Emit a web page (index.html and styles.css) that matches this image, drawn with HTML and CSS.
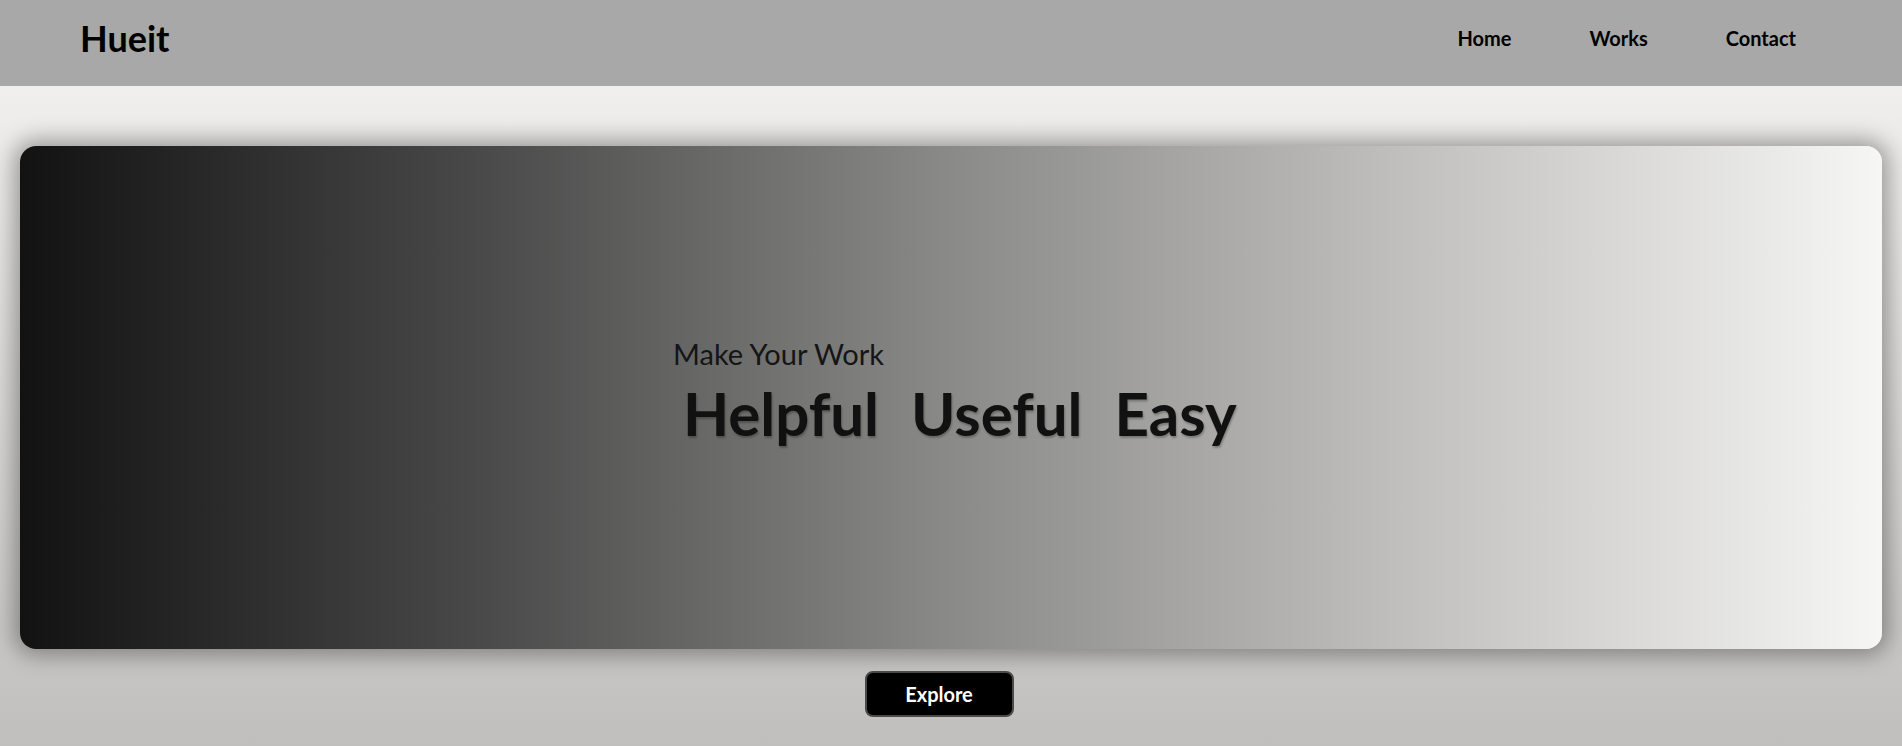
FILE: index.html
```html
<!DOCTYPE html>
<html lang="en">
<head>
<meta charset="utf-8">
<title>Hueit</title>
<link rel="stylesheet" href="styles.css">
</head>
<body>
<header class="topbar">
  <div class="logo">Hueit</div>
  <nav class="nav">
    <a class="nav-link" href="#">Home</a>
    <a class="nav-link" href="#">Works</a>
    <a class="nav-link" href="#">Contact</a>
  </nav>
</header>
<main class="main">
  <section class="hero">
    <div class="hero-text">
      <p class="hero-sub">Make Your Work</p>
      <h1 class="hero-title"><span class="word">Helpful</span><span class="word">Useful</span><span class="word">Easy</span></h1>
    </div>
  </section>
  <div class="actions">
    <button class="explore">Explore</button>
  </div>
</main>
</body>
</html>
```
FILE: styles.css
```css
html, body {
  margin: 0;
  padding: 0;
}
body {
  font-family: "Trebuchet MS", Lato, "Noto Sans", sans-serif;
  background: linear-gradient(to bottom, #a8a8a8 0, #a8a8a8 86px, #f0efed 86px, #c0bfbd 746px);
  min-height: 746px;
  overflow: hidden;
}
.topbar {
  height: 86px;
  display: flex;
  align-items: center;
  justify-content: space-between;
  padding: 0 106px 0 80px;
  background: #a8a8a8;
}
.logo {
  font-size: 36px;
  font-weight: 700;
  color: #000;
  margin-top: -10px;
}
.nav {
  display: flex;
  gap: 78px;
}
.nav-link {
  font-size: 20px;
  font-weight: 700;
  color: #000;
  text-decoration: none;
  margin-top: -10px;
}
.main {
  padding: 60px 20px 0;
}
.hero {
  height: 503px;
  border-radius: 16px;
  background: linear-gradient(to right, #121212 0%, #4a4a4a 25%, #8a8a88 50%, #c2c1bf 75%, #f6f6f4 100%);
  box-shadow: 0 0 22px 6px rgba(0, 0, 0, 0.35);
  display: flex;
  align-items: center;
  padding-left: 653px;
  box-sizing: border-box;
}
.hero-text {
  margin-top: -9px;
}
.hero-sub {
  margin: 0 0 9px;
  font-size: 29px;
  font-weight: 400;
  color: #151515;
  line-height: 1.1;
}
.hero-title {
  margin: 0;
  font-size: 60px;
  font-weight: 700;
  color: #111;
  line-height: 1.15;
  text-shadow: 1px 2px 2px rgba(0, 0, 0, 0.25);
  white-space: nowrap;
  display: flex;
  gap: 32px;
  padding-left: 10px;
}
.actions {
  display: flex;
  justify-content: center;
  padding-top: 22px;
  padding-right: 24px;
}
.explore {
  width: 149px;
  height: 46px;
  background: #000;
  color: #fff;
  border: 2px solid #4a4a4a;
  border-radius: 8px;
  font-family: inherit;
  font-size: 20px;
  font-weight: 700;
  box-sizing: border-box;
}
```
